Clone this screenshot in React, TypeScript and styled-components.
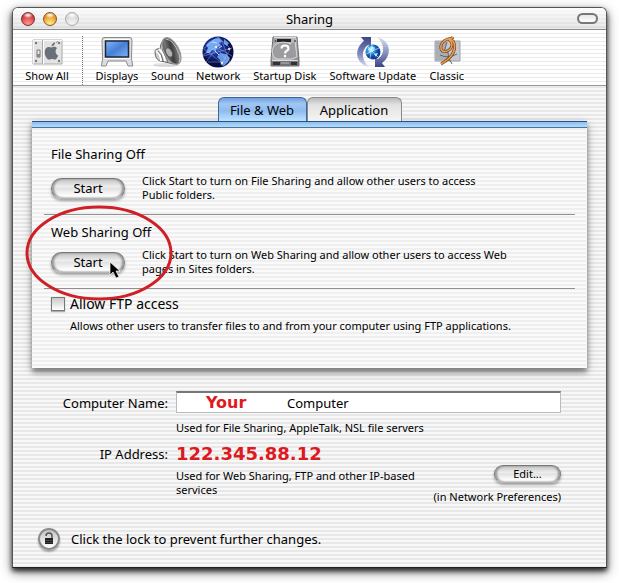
import React, { useState } from "react";
import styled, { createGlobalStyle, css } from "styled-components";

const Global = createGlobalStyle`
  * { box-sizing: border-box; }
  body { margin: 0; background: #fff; }
  body, button, input { font-family: "Noto Sans", "Open Sans", sans-serif; color: #000; }
  button { margin: 0; padding: 0; border: 0; cursor: default; }
  p, h1, h2 { margin: 0; font-weight: 400; }
`;

const Desktop = styled.div`
  padding: 7px 12px 16px;
`;

const Window = styled.main`
  border: 1px solid #555;
  border-bottom-color: #222;
  border-radius: 6px 6px 0 0;
  background: repeating-linear-gradient(#f8f8f8 0 2px, #e8e8e8 2px 4px);
  box-shadow: 0 3px 5px rgba(0, 0, 0, 0.75), 0 4px 12px rgba(0, 0, 0, 0.5);
`;

const TitleBar = styled.header`
  display: grid;
  grid-template-columns: 1fr auto 1fr;
  align-items: center;
  height: 22px;
  padding: 0 8px;
  border-bottom: 1px solid #8c8c8c;
  border-radius: 5px 5px 0 0;
  background: repeating-linear-gradient(rgba(255, 255, 255, 0.35) 0 2px, transparent 2px 4px),
    linear-gradient(#fbfbfb, #dcdcdc);
`;

const Title = styled.h1`
  font-size: 13px;
  line-height: 20px;
`;

const Lights = styled.div`
  display: flex;
  gap: 8px;
`;

const Light = styled.button<{ $top: string; $glow: string; $rim: string }>`
  width: 14px;
  height: 14px;
  border: 1px solid ${(p) => p.$rim};
  border-radius: 50%;
  background: radial-gradient(ellipse 5px 3px at 50% 18%, #fffd 20%, transparent 100%),
    radial-gradient(circle at 50% 90%, ${(p) => p.$glow}, ${(p) => p.$top} 75%);
`;

const Pill = styled.button`
  justify-self: end;
  width: 21px;
  height: 11px;
  border: 2px solid #777;
  border-radius: 6px;
  background: linear-gradient(#e6e6e6, #fff);
`;

const Toolbar = styled.nav`
  display: flex;
  gap: 12px;
  height: 56px;
  padding: 6px 11px 0;
  border-bottom: 1px solid #9b9b9b;
  background: repeating-linear-gradient(#fff 0 3px, #ebebeb 3px 4px);
`;

const Tool = styled.button<{ $width: number }>`
  display: flex;
  flex-direction: column;
  align-items: center;
  flex: 0 0 ${(p) => p.$width}px;
  background: none;
  font-size: 11px;
  line-height: 16px;
  white-space: nowrap;
  svg { display: block; flex: none; }
`;

const Separator = styled.div`
  height: 49px;
  border-left: 1px dotted #777;
`;

const Body = styled.div`
  padding: 11px 19px 17px;
`;

const Tabs = styled.div`
  display: flex;
  justify-content: center;
`;

const Tab = styled.button<{ $active: boolean; $width: number }>`
  width: ${(p) => p.$width}px;
  height: 24px;
  border: 1px solid #8a8a8a;
  border-bottom: 0;
  border-radius: 6px 6px 0 0;
  background: linear-gradient(#b9b9b9, #e2e2e2 30%, #f5f5f5);
  font-size: 13px;
  line-height: 22px;
  ${(p) =>
    p.$active &&
    css`
      border-color: #3e659d;
      background: linear-gradient(#6e9fe0, #a2c6f2 25%, #8dbbf0 55%, #bce3ff);
    `}
`;

const Panel = styled.section`
  padding: 15px 12px 35px;
  border-top: 1px solid #23548e;
  background: linear-gradient(#8fbcec, #b5dcfc 5px, #41779a 5px, #41779a 6px, transparent 6px),
    repeating-linear-gradient(#fafafa 0 2px, #efefef 2px 4px);
  box-shadow: 0 4px 5px rgba(0, 0, 0, 0.4), 0 3px 10px rgba(0, 0, 0, 0.25);
`;

const Service = styled.section<{ $gap: number }>`
  display: grid;
  row-gap: ${(p) => p.$gap}px;
  padding: 7px 7px 8px;
  border-bottom: 1px solid #909090;
`;

const ServiceTitle = styled.h2`
  font-size: 13px;
  line-height: 20px;
`;

const ServiceRow = styled.div`
  display: grid;
  grid-template-columns: 74px 1fr;
  column-gap: 17px;
  align-items: center;
  height: 36px;
`;

const Note = styled.p`
  font-size: 11px;
  line-height: 14px;
`;

const AquaButton = styled.button<{ $small?: boolean }>`
  display: block;
  width: ${(p) => (p.$small ? 67 : 74)}px;
  height: ${(p) => (p.$small ? 18 : 21)}px;
  border: 1px solid #777;
  border-bottom-color: #b5b5b5;
  border-radius: 11px;
  background: linear-gradient(#c4c4c4, #ededed 40%, #e2e2e2 50%, #fff 90%);
  box-shadow: inset 2px 0 2px #999, inset -2px 0 2px #999, 0 2px 3px rgba(0, 0, 0, 0.35);
  font-size: ${(p) => (p.$small ? 11 : 13)}px;
  line-height: 16px;
`;

const Ftp = styled.div`
  padding: 5px 7px 0;
`;

const CheckLabel = styled.label`
  display: flex;
  align-items: center;
  gap: 5px;
  font-size: 14px;
  line-height: 20px;
`;

const Check = styled.input`
  appearance: none;
  width: 14px;
  height: 14px;
  margin: 0;
  border: 1px solid #777;
  background: linear-gradient(#c9c9c9, #fff);
  box-shadow: 0 1px 1px rgba(0, 0, 0, 0.3);
  &:checked { background: #5c98df; }
`;

const FtpNote = styled(Note)`
  padding: 5px 0 0 19px;
`;

const Identity = styled.div`
  display: grid;
  grid-template-columns: 136px minmax(0, 1fr);
  column-gap: 8px;
  padding: 23px 26px 0 0;
`;

const FieldLabel = styled.label`
  padding-top: 1px;
  font-size: 13px;
  line-height: 22px;
  text-align: right;
`;

const NameField = styled.div`
  position: relative;
`;

const NameInput = styled.input`
  display: block;
  width: 100%;
  height: 22px;
  padding: 1px 4px 0 110px;
  border: 1px solid #bbb;
  border-top: 2px solid #777;
  border-radius: 0;
  background: #fff;
  font-size: 13px;
  outline: 0;
`;

const YourMark = styled.span`
  position: absolute;
  left: 30px;
  top: 1px;
  color: #dd1a22;
  font: 700 16px/22px "DejaVu Sans", sans-serif;
  pointer-events: none;
`;

const NameNote = styled(Note)`
  grid-column: 2;
  padding: 7px 0;
`;

const Address = styled.output`
  padding-top: 1px;
  color: #dd1a22;
  font: 700 18px/22px "DejaVu Sans", sans-serif;
`;

const NetworkRow = styled.div`
  grid-column: 2;
  display: grid;
  grid-template-columns: minmax(0, 1fr) auto;
`;

const AddressNote = styled(Note)`
  padding-top: 4px;
`;

const EditColumn = styled.div`
  display: flex;
  flex-direction: column;
  align-items: flex-end;
  gap: 7px;
`;

const LockRow = styled.footer`
  display: flex;
  align-items: center;
  gap: 11px;
  margin-top: 24px;
  padding-left: 6px;
  font-size: 13px;
  line-height: 20px;
`;

const LockButton = styled.button`
  display: grid;
  place-items: center;
  width: 22px;
  height: 22px;
  border: 2px solid #8b8b8b;
  border-radius: 50%;
  background: linear-gradient(#c4c4c4, #fff);
  box-shadow: 0 2px 2px rgba(0, 0, 0, 0.3);
`;

const ButtonSpot = styled.div`
  position: relative;
`;

const Ring = styled.svg`
  position: absolute;
  left: -27px;
  top: -46px;
  overflow: visible;
  pointer-events: none;
`;

function ShowAllIcon() {
  return (
    <svg width="32" height="32" viewBox="0 0 32 32">
      <path d="M2 4h29v24H2z" fill="#e3e3e4" stroke="#aaa" />
      <path d="M2.5 27.5V4.5H31" stroke="#fafafa" fill="none" />
      <path d="M11.5 4v24" stroke="#aaa" />
      <path d="M12.5 5v23" stroke="#fff" />
      {[[5, 7], [28, 7], [5, 25], [28, 25]].map(([x, y]) => (
        <circle key={`${x}-${y}`} cx={x} cy={y} r="1.2" fill="#777" />
      ))}
      <path d="M6 14h3v7H6z" fill="#eee" stroke="#777" />
      <path d="M6 18h3v3H6z" fill="#888" />
      <path d="M26 12c-2-2-4-1-5.500-.5C18.500 11 16 10.500 14.500 13c-2 4 .5 9.500 3 10.500 1.500.5 2-.5 3.500-.5s2 1 3.500.4c1.300-.6 2.200-2.400 2.700-3.800-3-1.500-3.400-5.400-1.200-7.600z" fill="#69707a" />
      <path d="M20.500 10.500c0-2.500 1.600-4 3.600-4.200.1 2.300-1.500 4.100-3.600 4.200z" fill="#747b84" />
      <path d="M25 7l2-2" stroke="#999" />
    </svg>
  );
}

function DisplaysIcon() {
  return (
    <svg width="36" height="32" viewBox="0 0 36 32">
      <defs>
        <linearGradient id="screen" x1="0" y1="0" x2="1" y2="1">
          <stop offset="0" stopColor="#83b6fa" /><stop offset=".5" stopColor="#477fd6" /><stop offset="1" stopColor="#80b3fa" />
        </linearGradient>
      </defs>
      <path d="M5 1.500h26q2 0 2 3l-.5 17q0 3 1 6.500l.2 2h-4.500L27 25H9l-2 5H2.500l.2-2q1-3.500.8-6.500L3 4.500q0-3 2-3z" fill="#dcdddc" stroke="#888c8c" />
      <path d="M5.500 3.500h25" stroke="#fff" />
      <path d="M6.500 5h23v16h-23z" fill="url(#screen)" stroke="#1d2739" strokeWidth="1.500" />
      <path d="M5 22.500h26" stroke="#f8f8f8" />
    </svg>
  );
}

function SoundIcon() {
  return (
    <svg width="32" height="32" viewBox="0 0 32 32">
      <defs>
        <linearGradient id="cone" x1="0" y1="0" x2="1" y2=".6">
          <stop offset="0" stopColor="#2b2b2b" /><stop offset=".3" stopColor="#777" /><stop offset=".6" stopColor="#3c3c3c" /><stop offset="1" stopColor="#8c8c8c" />
        </linearGradient>
      </defs>
      <ellipse cx="14" cy="29" rx="13" ry="2" fill="#999" opacity=".3" />
      <path d="M8 13q-5-1-5 3 0 7 5 9l5 1 9 2L12 3 9 8z" fill="#c9c9c9" stroke="#666" />
      <path d="M4 15q5 3 5 10M7 13q5 4 6 12" fill="none" stroke="#fff" strokeWidth="2" />
      <path d="M6 15q4 3 5 10M10 13l6 13" fill="none" stroke="#666" />
      <ellipse cx="19.500" cy="15" rx="7.500" ry="14.500" transform="rotate(-28 19.500 15)" fill="url(#cone)" stroke="#999" strokeWidth="1.200" />
      <path d="M14 3q8 1 13 15 2 6 0 8" fill="none" stroke="#c4c4c4" />
      <ellipse cx="17" cy="16.500" rx="3" ry="5" transform="rotate(-28 17 16.500)" fill="#b3b3b3" stroke="#555" />
    </svg>
  );
}

function NetworkIcon() {
  return (
    <svg width="34" height="32" viewBox="0 0 34 32">
      <defs>
        <radialGradient id="ocean" cx=".4" cy=".35">
          <stop offset="0" stopColor="#3461c9" /><stop offset=".55" stopColor="#182e94" /><stop offset="1" stopColor="#070d45" />
        </radialGradient>
      </defs>
      <circle cx="17" cy="16" r="15.500" fill="url(#ocean)" />
      <path d="M8 6l5-3 5-1 3 3-3 2 2 3-4 1-1 4-4-1-2 3-4 0 2-5-2-3z" fill="#75a8ed" />
      <path d="M19 17l6 1 4 4-2 4-4 4-3-1-1-5-3-3zM23 3l5 4-2 3-3-2z" fill="#6597e2" />
      <path d="M14 15l4 4M11 6l5 1M18 12l3-2" stroke="#bfdcff" />
      <g fill="none" stroke="#bdcdf8" strokeWidth=".6" opacity=".65">
        <path d="M2 13L17 1l13 12M2 19l13-8 16 9M5 26L21 5l8 22M3 13l18 14 9-15M2 20l29-8M7 26h20L15 11" />
      </g>
      <g fill="#fff"><circle cx="21" cy="27" r="1" /><circle cx="15" cy="11" r="1" /><circle cx="28" cy="13" r="1" /></g>
    </svg>
  );
}

function DiskIcon() {
  return (
    <svg width="32" height="32" viewBox="0 0 32 32">
      <defs>
        <linearGradient id="metal" x1="0" y1="0" x2="1" y2="1">
          <stop offset="0" stopColor="#9d9d9f" /><stop offset=".5" stopColor="#bcbcbf" /><stop offset="1" stopColor="#77777a" />
        </linearGradient>
      </defs>
      <path d="M4 1h24l2 23v6H2v-6z" fill="url(#metal)" stroke="#717174" />
      <path d="M2 24h28v6H2z" fill="#737376" />
      <path d="M3 24.500h26M5 1.500h22" stroke="#ddd" />
      <path d="M4 26h7v3H4zM22 26h6v3h-6z" fill="#333" /><path d="M12 27h8" stroke="#bbb" />
      <path d="M8 3h14v3H8z" fill="#242424" />
      <path d="M26 5l2 16-5 2H8c-6-3-6-10-2-14 3-3 10-4 16-1" fill="#9b9ba0" stroke="#d9d9dc" />
      <path d="M12.500 12.500q0-3 3.500-3t3.500 3q0 1.500-2 2.500-1.500.8-1.500 2.500M16 19v2.200" fill="none" stroke="#fff" strokeWidth="2.200" />
      <circle cx="6.500" cy="5" r="1" fill="#555" /><circle cx="26" cy="5" r="1" fill="#555" />
    </svg>
  );
}

function UpdateIcon() {
  return (
    <svg width="34" height="32" viewBox="0 0 34 32">
      <defs>
        <radialGradient id="planet" cx=".35" cy=".35">
          <stop offset="0" stopColor="#bff3ff" /><stop offset=".5" stopColor="#2b96dd" /><stop offset="1" stopColor="#103c9c" />
        </radialGradient>
        <linearGradient id="fade" x1="0" y1="0" x2="0" y2="1">
          <stop offset="0" stopColor="#dce2f1" /><stop offset=".4" stopColor="#9aa5cd" /><stop offset="1" stopColor="#3c4685" />
        </linearGradient>
        <linearGradient id="rise" x1="0" y1="1" x2="0" y2="0">
          <stop offset="0" stopColor="#dce2f1" /><stop offset=".4" stopColor="#8490c2" /><stop offset="1" stopColor="#3c4685" />
        </linearGradient>
      </defs>
      <path d="M13 31C4 29-1 21 2 13c1-3 3-6 6-8L5 1h10v10l-3-2c-7 5-7 15 1 22z" fill="url(#rise)" />
      <path d="M21 1c9 2 14 10 11 18-1 3-3 6-6 8l3 4H19V21l3 2c7-5 7-15-1-22z" fill="url(#fade)" />
      <circle cx="17" cy="16" r="7.500" fill="url(#planet)" />
      <path d="M12 13l4-3 3 2-2 3-3 1zM18 18l4-1-2 4z" fill="#b4ebff" />
      <path d="M10 18l13-6M12 11l10 10M16 9l-2 14" stroke="#d9f5ff" strokeWidth=".6" />
    </svg>
  );
}

function ClassicIcon() {
  return (
    <svg width="32" height="32" viewBox="0 0 32 32">
      <path d="M4 5h25v20H4z" fill="#c5c8cc" stroke="#9fa4ac" />
      <path d="M4.500 24V5.500H16L14 16h3l1 8z" fill="#abafb5" />
      <path d="M16 6l-3 10h4l1 9M9 19q8 4 17-1M17 21l4 7" fill="none" stroke="#62666c" />
      <path d="M22 1c-1 2-3 2-5 2C12 4 9 9 10 13c2 5 10 2 11-4 0-3-2-5-4-6 7 0 8 8 5 14-3 6-7 8-12 11" fill="none" stroke="#74401d" strokeWidth="2.800" />
      <path d="M22 1c-1 2-3 2-5 2C12 4 9 9 10 13c2 5 10 2 11-4 0-3-2-5-4-6 7 0 8 8 5 14-3 6-7 8-12 11" fill="none" stroke="#f2a04e" strokeWidth="1.500" />
    </svg>
  );
}

const tools = [
  { name: "Displays", width: 44, icon: <DisplaysIcon /> },
  { name: "Sound", width: 33, icon: <SoundIcon /> },
  { name: "Network", width: 44, icon: <NetworkIcon /> },
  { name: "Startup Disk", width: 65, icon: <DiskIcon /> },
  { name: "Software Update", width: 87, icon: <UpdateIcon /> },
  { name: "Classic", width: 37, icon: <ClassicIcon /> },
];

export default function App() {
  const [tab, setTab] = useState("File & Web");
  const [name, setName] = useState("Computer");
  return (
    <>
      <Global />
      <Desktop>
        <Window>
          <TitleBar>
            <Lights>
              <Light aria-label="Close" $top="#c8323a" $glow="#ff9a90" $rim="#7c2c30" />
              <Light aria-label="Minimize" $top="#e48a1c" $glow="#fff08a" $rim="#85552a" />
              <Light aria-label="Zoom" $top="#d5d5d5" $glow="#f5f5f5" $rim="#aaa" />
            </Lights>
            <Title>Sharing</Title>
            <Pill aria-label="Toggle toolbar" />
          </TitleBar>
          <Toolbar>
            <Tool $width={46}><ShowAllIcon />Show All</Tool>
            <Separator />
            {tools.map((t) => (
              <Tool key={t.name} $width={t.width}>{t.icon}{t.name}</Tool>
            ))}
          </Toolbar>
          <Body>
            <Tabs role="tablist">
              <Tab role="tab" aria-selected={tab === "File & Web"} $active={tab === "File & Web"} $width={89} onClick={() => setTab("File & Web")}>File &amp; Web</Tab>
              <Tab role="tab" aria-selected={tab === "Application"} $active={tab === "Application"} $width={95} onClick={() => setTab("Application")}>Application</Tab>
            </Tabs>
            <Panel>
              <Service $gap={6}>
                <ServiceTitle>File Sharing Off</ServiceTitle>
                <ServiceRow>
                  <AquaButton>Start</AquaButton>
                  <Note>Click Start to turn on File Sharing and allow other users to access<br />Public folders.</Note>
                </ServiceRow>
              </Service>
              <Service $gap={2}>
                <ServiceTitle>Web Sharing Off</ServiceTitle>
                <ServiceRow>
                  <ButtonSpot>
                    <AquaButton>Start</AquaButton>
                    <Ring width="150" height="96" viewBox="0 0 150 96" aria-hidden="true">
                      <ellipse cx="75" cy="47" rx="72" ry="46" fill="none" stroke="#cf2027" strokeWidth="3" />
                      <path d="M86 56v13l3-3 3 6 3-1-3-6h4z" fill="#000" stroke="#fff" strokeWidth=".7" />
                    </Ring>
                  </ButtonSpot>
                  <Note>Click Start to turn on Web Sharing and allow other users to access Web<br />pages in Sites folders.</Note>
                </ServiceRow>
              </Service>
              <Ftp>
                <CheckLabel><Check type="checkbox" />Allow FTP access</CheckLabel>
                <FtpNote>Allows other users to transfer files to and from your computer using FTP applications.</FtpNote>
              </Ftp>
            </Panel>
            <Identity>
              <FieldLabel htmlFor="computer-name">Computer Name:</FieldLabel>
              <NameField>
                <NameInput id="computer-name" value={name} onChange={(e) => setName(e.target.value)} />
                <YourMark>Your</YourMark>
              </NameField>
              <NameNote>Used for File Sharing, AppleTalk, NSL file servers</NameNote>
              <FieldLabel htmlFor="ip-address">IP Address:</FieldLabel>
              <Address id="ip-address">122.345.88.12</Address>
              <NetworkRow>
                <AddressNote>Used for Web Sharing, FTP and other IP-based<br />services</AddressNote>
                <EditColumn>
                  <AquaButton $small>Edit...</AquaButton>
                  <Note>(in Network Preferences)</Note>
                </EditColumn>
              </NetworkRow>
            </Identity>
            <LockRow>
              <LockButton aria-label="Lock">
                <svg width="12" height="14" viewBox="0 0 12 14">
                  <path d="M3 4q0-3 3-3t3 3v2" fill="none" stroke="#555" strokeWidth="1.500" />
                  <path d="M2 6h8v6H2z" fill="#222" /><path d="M2 8.500h8M2 10.500h8" stroke="#555" strokeWidth=".6" />
                </svg>
              </LockButton>
              Click the lock to prevent further changes.
            </LockRow>
          </Body>
        </Window>
      </Desktop>
    </>
  );
}
